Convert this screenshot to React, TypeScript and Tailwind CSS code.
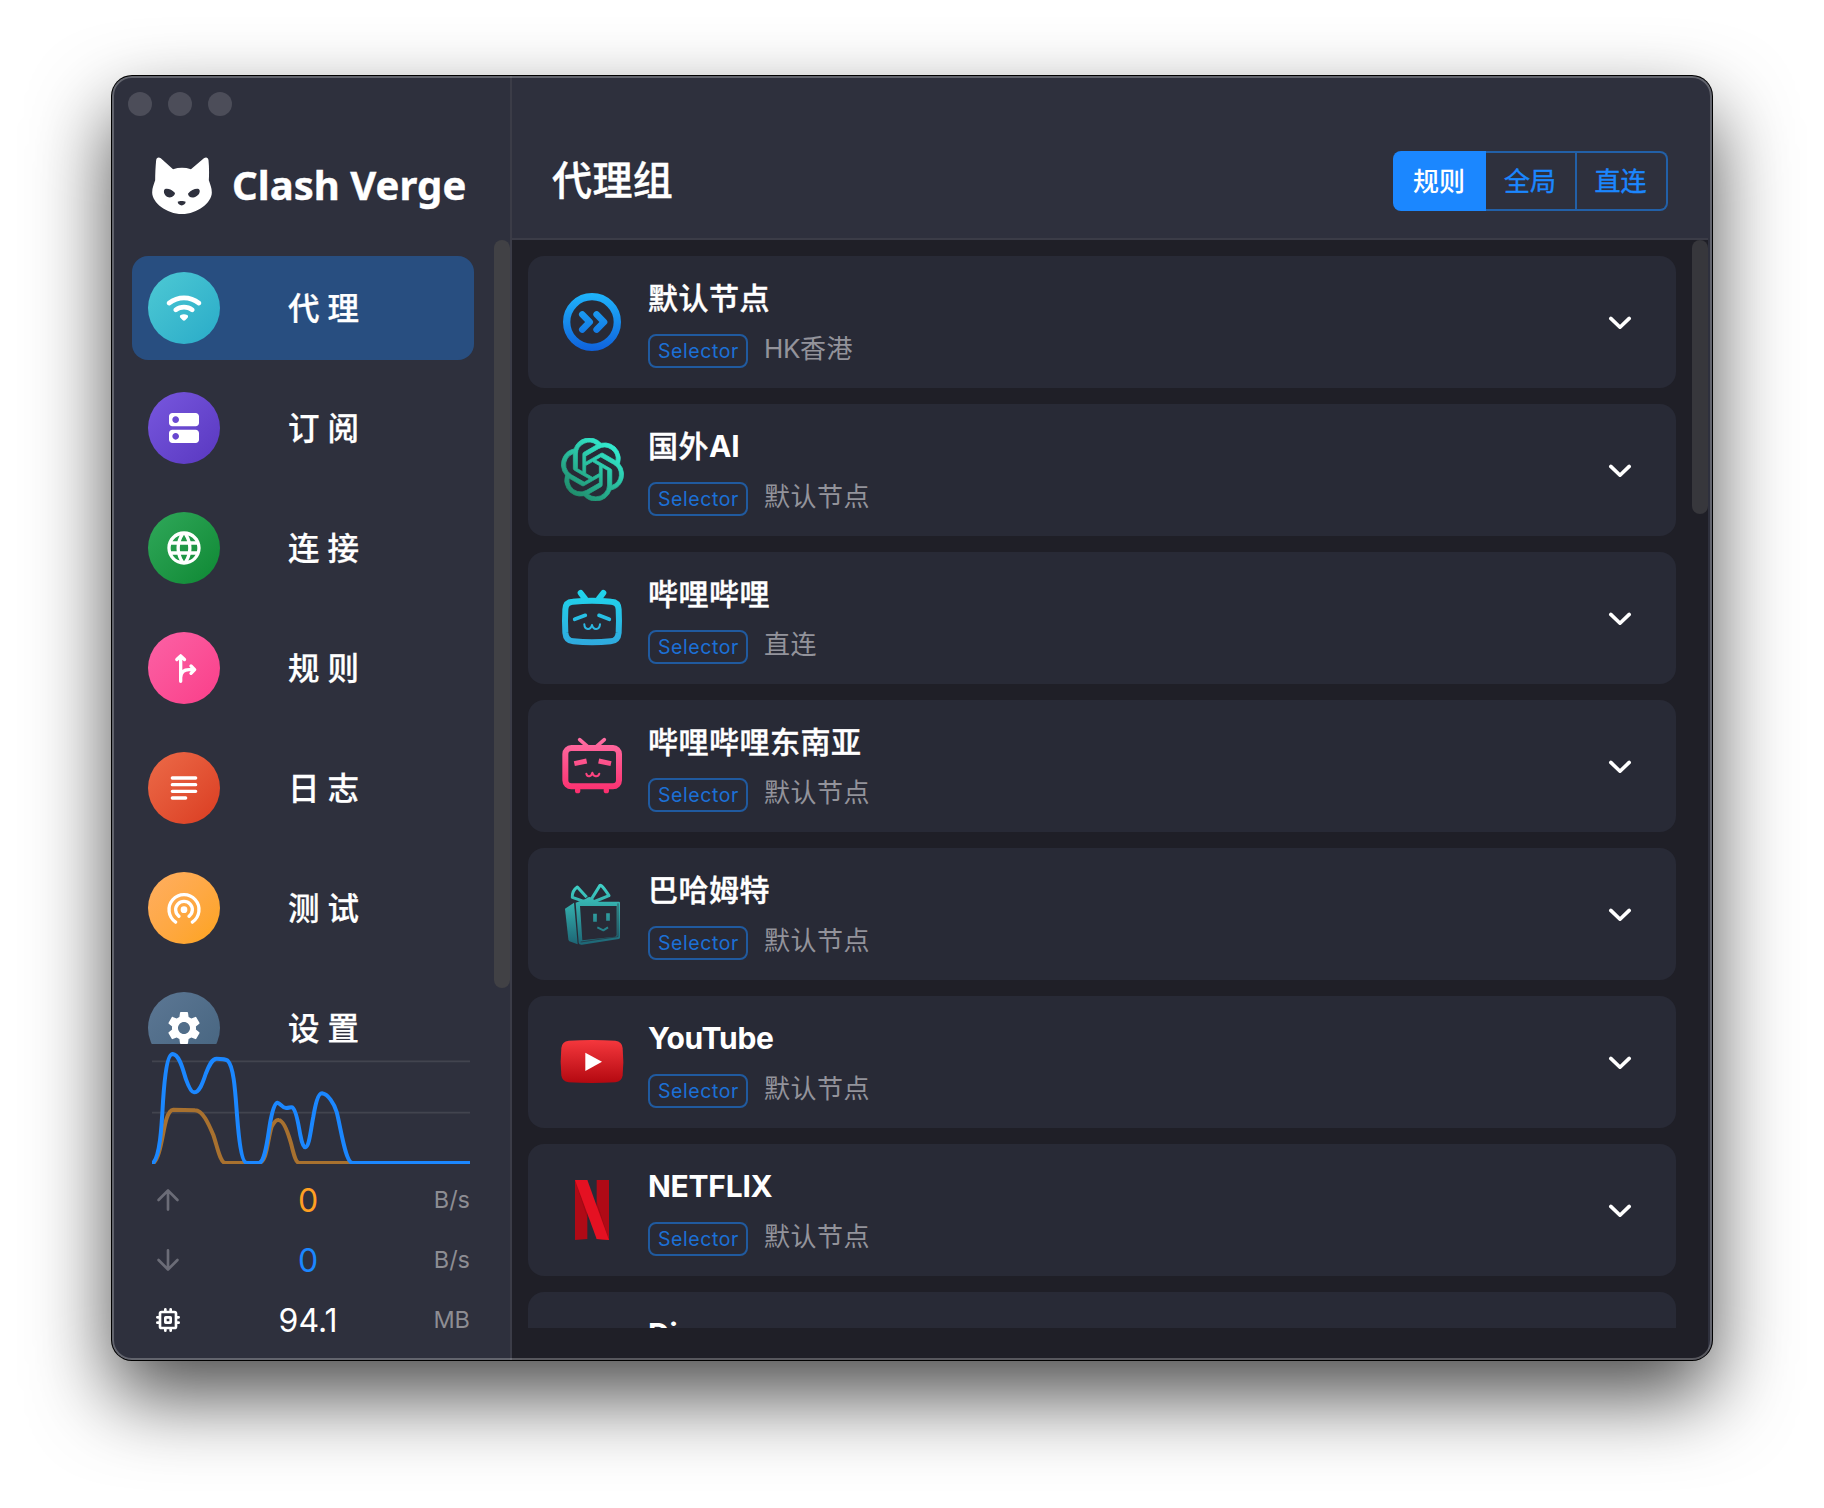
import React from "react";
import { MdLanguage, MdSettings } from "react-icons/md";
import { SiOpenai } from "react-icons/si";

const NavSvg = ({ children }: { children: React.ReactNode }) => (
  <svg
    viewBox="0 0 24 24"
    className="size-10"
    fill="none"
    stroke="currentColor"
    strokeWidth="2"
    strokeLinecap="round"
    strokeLinejoin="round"
  >
    {children}
  </svg>
);

const WifiIcon = () => (
  <svg viewBox="0 0 24 24" className="size-10" fill="currentColor">
    <path d="M2.06 10.06c.51.51 1.32.56 1.87.1 4.67-3.84 11.45-3.84 16.13-.01.56.46 1.38.42 1.89-.09.59-.59.55-1.57-.1-2.1-5.71-4.67-13.97-4.67-19.69 0-.65.52-.7 1.5-.1 2.1zm7.76 7.76 1.47 1.47c.39.39 1.02.39 1.41 0l1.47-1.47c.47-.47.37-1.28-.23-1.59-1.22-.63-2.68-.63-3.91 0-.57.31-.68 1.12-.21 1.59zm-3.73-3.73c.49.49 1.26.54 1.83.13 2.44-1.73 5.72-1.73 8.16 0 .57.4 1.34.36 1.83-.13l.01-.01c.6-.6.56-1.62-.13-2.11-3.44-2.49-8.13-2.49-11.58 0-.69.5-.73 1.51-.12 2.12z" />
  </svg>
);

const DnsIcon = () => (
  <svg viewBox="0 0 24 24" className="size-10" fill="currentColor">
    <path d="M19 13H5c-1.1 0-2 .9-2 2v4c0 1.1.9 2 2 2h14c1.1 0 2-.9 2-2v-4c0-1.1-.9-2-2-2zM7 19c-1.1 0-2-.9-2-2s.9-2 2-2 2 .9 2 2-.9 2-2 2zM19 3H5c-1.1 0-2 .9-2 2v4c0 1.1.9 2 2 2h14c1.1 0 2-.9 2-2V5c0-1.1-.9-2-2-2zM7 9c-1.1 0-2-.9-2-2s.9-2 2-2 2 .9 2 2-.9 2-2 2z" />
  </svg>
);

const ForkIcon = () => (
  <NavSvg>
    <path d="M10 20V5M7.7 6.900 10 4.700l2.300 2.200M10 17.600C10.200 14.600 12 13 15 13h3M16.200 10.800 18.400 13l-2.200 2.200" />
  </NavSvg>
);

const SubjectIcon = () => (
  <NavSvg>
    <path d="M5 6h14M5 10h14M5 14h14M5 18h8" />
  </NavSvg>
);

const TetheringIcon = () => (
  <NavSvg>
    <path d="M7 20.48A9 9 0 1 1 17 20.48M9 17A5 5 0 1 1 15 17" />
    <circle cx="12" cy="13" r="2" fill="currentColor" stroke="none" />
  </NavSvg>
);

const CatLogo = () => (
  <svg viewBox="156 274 180 172" className="h-[57px] w-[60px] shrink-0">
    <path
      fill="#fff"
      fillRule="evenodd"
      d="M168 284C169 276 175 273 182 278L219 311Q246 302 273 311L312 278C319 273 325 276 326 284C328 303 328 326 327 344C331 357 336 366 336 381C336 411 293 446 246 446S156 411 156 381C156 366 161 357 165 344C165 326 166 303 168 284ZM192 374C195 366 214 369 225 383C224 390 218 396 209 396C199 396 189 386 192 374ZM299 374C296 366 275 371 264 385C265 392 271 397 280 396C291 395 302 384 299 374ZM233 409C238 406 252 406 257 409C257 415 251 420 245 420S233 415 233 409Z"
    />
  </svg>
);

const nav = [
  { label: "代理", icon: <WifiIcon />, bg: "from-[#4dc9d4] to-[#28abc8]", on: true },
  { label: "订阅", icon: <DnsIcon />, bg: "from-[#7857de] to-[#5937c0]" },
  { label: "连接", icon: <MdLanguage className="size-10" />, bg: "from-[#2fa85a] to-[#0c8833]" },
  { label: "规则", icon: <ForkIcon />, bg: "from-[#fb61a5] to-[#fa3d89]" },
  { label: "日志", icon: <SubjectIcon />, bg: "from-[#ec6a48] to-[#da3b20]" },
  { label: "测试", icon: <TetheringIcon />, bg: "from-[#ffae60] to-[#fda316]" },
  { label: "设置", icon: <MdSettings className="size-10" />, bg: "from-[#5c7794] to-[#46647f]" },
];

/* Group icons share one drawing scale: three units to a pixel. */
const GroupSvg = ({ children }: { children: React.ReactNode }) => (
  <svg viewBox="0 0 192 192" className="size-16">
    {children}
  </svg>
);

const Grad = ({ id, a, b, diag }: { id: string; a: string; b: string; diag?: boolean }) => (
  <linearGradient
    id={id}
    gradientUnits={diag ? "objectBoundingBox" : "userSpaceOnUse"}
    x1={diag ? 0.8 : 0}
    y1={diag ? 0.1 : 10}
    x2={diag ? 0.2 : 0}
    y2={diag ? 0.95 : 182}
  >
    <stop offset="0" stopColor={a} />
    <stop offset="1" stopColor={b} />
  </linearGradient>
);

const DefaultNode = () => (
  <GroupSvg>
    <Grad id="g-def" a="#1fb4fb" b="#0f62dc" />
    <g fill="none" stroke="url(#g-def)" strokeLinecap="round" strokeLinejoin="round">
      <circle cx="96" cy="96" r="76" strokeWidth="22" />
      <path strokeWidth="20" d="M67 73.500L89 96 67 118.500M110 73.500L132 96 110 118.500" />
    </g>
  </GroupSvg>
);

const OpenAI = () => (
  <>
    <svg className="absolute size-0">
      <Grad id="g-ai" a="#33ecd0" b="#1f8a68" diag />
    </svg>
    <SiOpenai className="mb-px size-[63px]" fill="url(#g-ai)" stroke="url(#g-ai)" strokeWidth="0.3" />
  </>
);

const Bili = () => (
  <GroupSvg>
    <Grad id="g-bili" a="#1fd6ec" b="#30a8de" />
    <g fill="none" stroke="url(#g-bili)" strokeLinecap="round" strokeLinejoin="round">
      <path strokeWidth="18" d="M62 21L75 38M130 21L117 38" />
      <path
        strokeWidth="18"
        d="M38 47Q96 42 154 47Q175 48 176 70Q178 106 176 140Q174 164 152 166Q96 172 40 166Q18 164 16 140Q14 106 16 70Q17 48 38 47Z"
      />
      <path strokeWidth="11" d="M44 100L76 88M148 100L117 88" />
      <path strokeWidth="6" d="M73 115C74 133 92 133 96 117C100 133 118 133 120 115" />
    </g>
  </GroupSvg>
);

const BiliSea = () => (
  <GroupSvg>
    <Grad id="g-sea" a="#ff6fa4" b="#fb2c6c" />
    <g fill="none" stroke="url(#g-sea)" strokeLinecap="round" strokeLinejoin="round">
      <path strokeWidth="11" d="M59 17L83 38M133 17L109 38" />
      <rect strokeWidth="18" x="16" y="42" width="161" height="115" rx="18" />
      <path strokeWidth="15" strokeLinecap="butt" d="M43 89L80 81M153 89L116 81" />
      <path strokeWidth="6" d="M79 119C82 131 94 128 97 116C100 128 114 131 118 119" />
      <path strokeWidth="16" d="M53 168V170M139 168V170" />
    </g>
  </GroupSvg>
);

const Gift = () => (
  <GroupSvg>
    <Grad id="g-gift" a="#3fd0c6" b="#1e6877" />
    <g fill="url(#g-gift)" stroke="none">
      <path d="M15 80L42 62 53 187 28 178Q26 177 25 172Z" />
      <path
        fillRule="evenodd"
        d="M47 62L78 50Q88 40 98 50L110 59H177Q180 59 180 63V167Q180 170 176 171L66 188Q57 189 56 182ZM60 72L67 175L165 164Q170 163 170 158V72Z"
      />
    </g>
    <g fill="none" stroke="url(#g-gift)" strokeLinejoin="round">
      <path strokeWidth="9" d="M82 62L37 46Q36 26 52 15L80 46M90 58L120 10Q124 6 147 41L100 60" />
      <path strokeWidth="11" d="M105 95V119M144 94V116" />
      <path strokeWidth="6" d="M112 136L130 145 144 136" />
    </g>
    <path fill="none" stroke="#282a36" strokeWidth="2" d="M174 64V164L62 180" />
  </GroupSvg>
);

const YouTube = () => (
  <GroupSvg>
    <Grad id="g-yt" a="#ff3f44" b="#a80008" />
    <path
      fill="url(#g-yt)"
      d="M26 32Q96 28 166 32Q186 34 188 54Q192 96 188 136Q186 154 166 157Q96 161 26 157Q6 154 4 136Q0 96 4 54Q6 34 26 32Z"
    />
    <path fill="#fff" d="M76 68L126 95 76 123Z" />
  </GroupSvg>
);

const Netflix = () => (
  <GroupSvg>
    <path fill="#b00a16" d="M45 6H82V183L45 186ZM110 6H147V186L110 183Z" />
    <path fill="#8f0812" d="M45 6L82 105V120L62 60ZM110 70L147 186 110 100Z" opacity=".5" />
    <path fill="#e51122" d="M45 6H82L147 186 110 183Z" />
  </GroupSvg>
);

const groups = [
  { name: "默认节点", now: "HK香港", icon: <DefaultNode /> },
  { name: "国外AI", now: "默认节点", icon: <OpenAI /> },
  { name: "哔哩哔哩", now: "直连", icon: <Bili /> },
  { name: "哔哩哔哩东南亚", now: "默认节点", icon: <BiliSea /> },
  { name: "巴哈姆特", now: "默认节点", icon: <Gift /> },
  { name: "YouTube", now: "默认节点", icon: <YouTube /> },
  { name: "NETFLIX", now: "默认节点", icon: <Netflix /> },
  { name: "Disney", now: "默认节点", icon: null },
];

/* Sets Latin runs with their own class, so that they sit well beside Chinese. */
const Mixed = ({ text, latin }: { text: string; latin: string }) => (
  <>
    {text.split(/([A-Za-z]+)/).map((part, i) =>
      i % 2 ? (
        <span key={i} className={latin}>
          {part}
        </span>
      ) : (
        part
      ),
    )}
  </>
);

const Chevron = () => (
  <svg
    viewBox="0 0 24 14"
    className="mt-px mr-11 h-3.5 w-6"
    fill="none"
    stroke="#fff"
    strokeWidth="3.6"
    strokeLinecap="round"
    strokeLinejoin="round"
  >
    <path d="M2.800 2.400L12 11.200 21.200 2.400" />
  </svg>
);

const TrafficGraph = () => (
  <svg viewBox="66 42 954 360" className="block h-[120px] w-[318px]" fill="none">
    <path d="M66 94H1020M66 248H1020" stroke="#42444f" strokeWidth="5" />
    <path
      d="M66 402C92 390 98 300 110 265Q118 240 130 239L195 241C218 241 235 280 250 315C262 350 270 398 286 399H388C412 392 412 330 425 290Q436 268 446 270C462 272 476 315 483 340C490 365 496 399 508 399H1020"
      stroke="#a8712f"
      strokeWidth="12"
    />
    <path
      d="M66 402C90 385 95 290 99 215C104 140 112 72 128 72C150 74 160 125 168 148Q182 187 192 187C208 187 218 160 227 132C238 104 246 86 260 86C275 86 288 88 293 92C312 110 316 190 321 255C326 320 334 398 350 399H388C408 392 414 310 422 270Q432 218 442 218C452 220 456 234 468 234C478 234 482 230 487 232C500 240 506 290 511 315Q518 352 526 352C538 350 542 300 550 260C556 225 564 190 576 190C594 192 612 220 620 246C632 290 646 399 668 399H1020"
      stroke="#1b87ff"
      strokeWidth="12"
    />
  </svg>
);

const stats = [
  {
    value: "0",
    unit: "B/s",
    color: "text-[#ff9f22]",
    icon: <path d="M12 19.200V5M4.900 12 12 4.900 19.100 12" />,
    tone: "text-[#6b6c77]",
  },
  {
    value: "0",
    unit: "B/s",
    color: "text-[#1b87ff]",
    icon: <path d="M12 4.800V19M4.900 12 12 19.100 19.100 12" />,
    tone: "text-[#6b6c77]",
  },
  {
    value: "94.1",
    unit: "MB",
    color: "text-white",
    icon: (
      <>
        <rect x="6" y="6" width="12" height="12" rx="1.2" />
        <rect x="10" y="10" width="4" height="4" rx=".3" />
        <path d="M10 4V5M14 4V5M10 19V20M14 19V20M4 10H5M4 14H5M19 10H20M19 14H20" />
      </>
    ),
    tone: "text-white",
  },
];

export default function App() {
  return (
    <div className="h-[1508px] w-[1824px] overflow-hidden bg-white px-28 pt-19 font-['Inter','Noto_Sans_CJK_SC',sans-serif] text-white">
      <div className="relative flex h-[1284px] w-[1600px] overflow-hidden rounded-[20px] bg-[#2e303d] shadow-[0_0_0_1px_#000,0_36px_80px_rgba(0,0,0,0.7)]">
        <aside className="flex w-[400px] shrink-0 flex-col border-r-2 border-[#3b3c47]">
          <div className="flex h-[164px] flex-col">
            <div className="flex gap-4 px-4 pt-4">
              <span className="size-6 rounded-full bg-[#4c4d59]" />
              <span className="size-6 rounded-full bg-[#4c4d59]" />
              <span className="size-6 rounded-full bg-[#4c4d59]" />
            </div>
            <div className="flex items-center gap-5 pt-[41px] pl-10">
              <CatLogo />
              <span className="pb-0.5 font-['Noto_Sans'] text-[40px] leading-none font-bold tracking-[0.05px] whitespace-nowrap [-webkit-text-stroke:0.4px_#fff]">
                Clash Verge
              </span>
            </div>
          </div>
          <div className="flex h-[804px] justify-between overflow-hidden pl-5">
            <nav className="flex w-[342px] flex-col gap-4 pt-4">
              {nav.map((n) => (
                <div
                  key={n.label}
                  className={`flex h-[104px] shrink-0 items-center rounded-2xl pl-4 ${n.on ? "bg-[#284e80]" : ""}`}
                >
                  <span
                    className={`flex size-18 items-center justify-center rounded-full bg-linear-135 ${n.bg}`}
                  >
                    {n.icon}
                  </span>
                  <span className="ml-[68px] pt-0.5 text-[31.500px] leading-none font-medium tracking-[8px] [-webkit-text-stroke:0.25px_#fff]">
                    {n.label}
                  </span>
                </div>
              ))}
            </nav>
            <div className="h-[748px] w-4 rounded-full bg-[#414145]" />
          </div>
          <div className="pl-10">
            <TrafficGraph />
            <div className="w-[318px] pt-1.5">
              {stats.map((s, i) => (
                <div key={i} className="flex h-15 items-center">
                  <svg
                    viewBox="0 0 24 24"
                    className={`size-8 ${s.tone}`}
                    fill="none"
                    stroke="currentColor"
                    strokeWidth="2"
                    strokeLinecap="round"
                    strokeLinejoin="round"
                  >
                    {s.icon}
                  </svg>
                  <span className={`flex-1 pt-px pl-[42px] text-center text-[32px] leading-none ${s.color}`}>
                    {s.value}
                  </span>
                  <span className="w-20 text-right text-[23.500px] leading-none text-[#8d8d93]">
                    {s.unit}
                  </span>
                </div>
              ))}
            </div>
          </div>
        </aside>
        <main className="flex flex-1 flex-col pr-1">
          <header className="flex h-[164px] shrink-0 items-start justify-between border-b-2 border-[#3b3c47] pr-10 pl-10">
            <h1 className="pt-[85px] text-[40px] leading-none font-medium tracking-[0.4px] [-webkit-text-stroke:0.4px_#fff]">
              代理组
            </h1>
            <div className="mt-[75px] flex h-15 text-[26px] text-[#1b87ff]">
              <span className="flex w-[93px] items-center justify-center rounded-l-lg bg-[#1b87ff] pr-px font-medium text-white">
                规则
              </span>
              <span className="flex w-[91px] items-center justify-center border-y-2 border-r-2 border-[#2260a8] pr-px [-webkit-text-stroke:0.4px_#1b87ff]">
                全局
              </span>
              <span className="flex w-[91px] items-center justify-center rounded-r-lg border-2 border-l-0 border-[#2260a8] pr-0.5 [-webkit-text-stroke:0.4px_#1b87ff]">
                直连
              </span>
            </div>
          </header>
          <div className="flex-1 bg-[#1f1f27]">
            <div className="flex h-[1088px] justify-between overflow-hidden pl-4">
              <div className="flex w-[1148px] flex-col gap-4 pt-4">
                {groups.map((g) => (
                  <div
                    key={g.name}
                    className="flex h-[132px] shrink-0 items-center rounded-2xl bg-[#282a36] pl-8"
                  >
                    <span className="flex size-16 items-center justify-center">{g.icon}</span>
                    <div className="ml-6 h-full flex-1 pt-[22px]">
                      <div className="h-10 text-[30px] leading-10 font-medium tracking-[0.5px] [-webkit-text-stroke:0.4px_#fff]">
                        <Mixed
                          text={g.name}
                          latin="font-bold tracking-[-0.25px] [-webkit-text-stroke:0px]"
                        />
                      </div>
                      <div className="flex items-start pt-4">
                        <span className="flex h-[34px] w-[100px] items-center justify-center rounded-lg border-2 border-[#205a9f] pt-px pl-px text-[19.500px] tracking-[0.6px] text-[#1c70d6]">
                          Selector
                        </span>
                        <span className="ml-4 text-[26px] leading-[30px] tracking-[0.5px] text-[#93939b]">
                          <Mixed text={g.now} latin="tracking-[-0.4px]" />
                        </span>
                      </div>
                    </div>
                    <Chevron />
                  </div>
                ))}
              </div>
              <div className="h-[274px] w-4 rounded-full bg-[#37373c]" />
            </div>
          </div>
        </main>
        <div className="pointer-events-none absolute inset-0 rounded-[20px] border-2 border-white/25" />
      </div>
    </div>
  );
}
